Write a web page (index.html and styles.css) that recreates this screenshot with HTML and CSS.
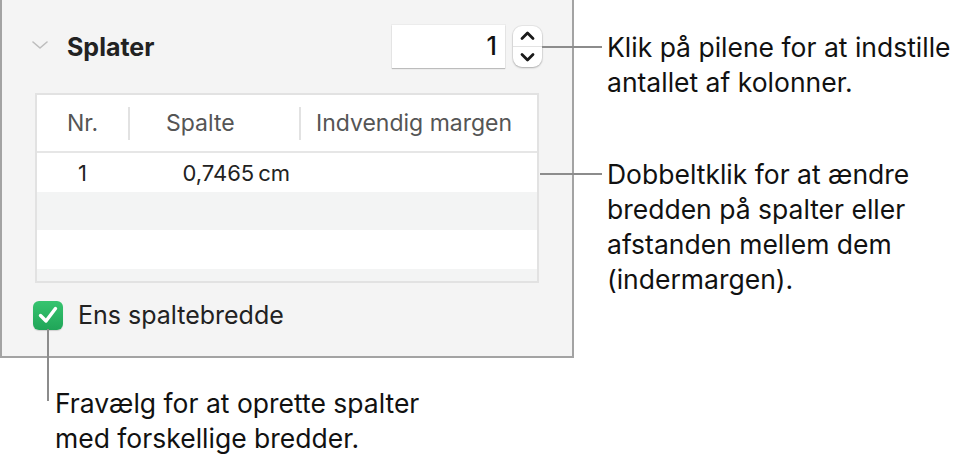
FILE: index.html
```html
<!DOCTYPE html>
<html lang="da">
<head>
    <meta charset="UTF-8">
    <title>Splater</title>
    <link rel="stylesheet" href="styles.css">
</head>
<body>

<div class="page">
    <div class="panel">
        <div class="panel-head">
            <svg class="chevron" width="16" height="8" viewBox="0 0 16 8">
                <path d="M1 1 L8 7 L15 1" fill="none" stroke="#bdbdbd" stroke-width="1.6" stroke-linecap="round" stroke-linejoin="round"/>
            </svg>
            <span class="panel-title">Splater</span>
            <div class="stepper">
                <div class="stepper-field">1</div>
                <div class="stepper-buttons">
                    <svg width="29" height="20" viewBox="0 0 29 20">
                        <path d="M9 12.5 L14.5 7 L20 12.5" fill="none" stroke="#1a1a1a" stroke-width="2.8" stroke-linecap="round" stroke-linejoin="round"/>
                    </svg>
                    <svg width="29" height="20" viewBox="0 0 29 20">
                        <path d="M9 7.5 L14.5 13 L20 7.5" fill="none" stroke="#1a1a1a" stroke-width="2.8" stroke-linecap="round" stroke-linejoin="round"/>
                    </svg>
                </div>
            </div>
        </div>

        <div class="col-table">
            <div class="col-head">
                <div class="cell cell-nr">Nr.</div>
                <div class="cell cell-width sep">Spalte</div>
                <div class="cell cell-gap sep">Indvendig margen</div>
            </div>
            <div class="col-row">
                <div class="cell cell-nr">1</div>
                <div class="cell cell-value">0,7465&#8201;cm</div>
                <div class="cell"></div>
            </div>
            <div class="col-row alt"></div>
            <div class="col-row"></div>
            <div class="col-row alt short"></div>
        </div>

        <label class="check-row">
            <span class="checkbox">
                <svg width="24" height="22" viewBox="0 0 24 22">
                    <path d="M4.5 11.5 L10 17 L19.5 4.5" fill="none" stroke="#fff" stroke-width="3.4" stroke-linecap="round" stroke-linejoin="round"/>
                </svg>
            </span>
            <span>Ens spaltebredde</span>
        </label>
    </div>

    <div class="notes">
        <p class="note note-arrows">Klik på pilene for at indstille<br>antallet af kolonner.</p>
        <p class="note note-table">Dobbeltklik for at ændre<br>bredden på spalter eller<br>afstanden mellem dem<br>(indermargen).</p>
    </div>

    <p class="note note-check">Fravælg for at oprette spalter<br>med forskellige bredder.</p>
</div>

</body>
</html>
```

FILE: styles.css
```css
body {
    margin: 0;
    background-color: white;
    font-family: Inter, "Noto Sans", sans-serif;
    color: #1d1d1d;
}
.page {
    display: grid;
    grid-template-columns: 574px 1fr;
    grid-template-rows: 358px auto;
}
.panel {
    box-sizing: border-box;
    height: 358px;
    background-color: #f4f4f4;
    border: 2px solid #a3a3a3;
    border-top: none;
}
.panel-head {
    display: flex;
    align-items: center;
    height: 43px;
    margin: 25px 30px 0 30px;
}
.chevron {
    margin-top: -4px;
}
.panel-title {
    margin-left: 19px;
    font-size: 25px;
    font-weight: 700;
    color: #222;
}
.stepper {
    display: flex;
    align-items: center;
    gap: 8px;
    margin-left: auto;
}
.stepper-field {
    box-sizing: border-box;
    width: 113px;
    height: 43px;
    padding: 0 8px;
    background-color: white;
    box-shadow: 0 1px 1px rgba(0, 0, 0, 0.2), 0 0 0 1px rgba(0, 0, 0, 0.03);
    text-align: right;
    line-height: 43px;
    font-size: 25px;
    font-weight: 500;
    color: #111;
}
.stepper-buttons {
    display: flex;
    flex-direction: column;
    justify-content: center;
    width: 29px;
    height: 41px;
    background-color: white;
    border-radius: 9px;
    box-shadow: 0 1px 2px rgba(0, 0, 0, 0.25), 0 0 0 1px rgba(0, 0, 0, 0.05);
}
.stepper-buttons svg {
    display: block;
    height: 20px;
}
.stepper-buttons svg + svg {
    border-top: 1px solid #e3e3e3;
}
.col-table {
    width: 504px;
    box-sizing: border-box;
    margin: 25px 0 0 33px;
    background-color: white;
    border: 2px solid #e2e2e2;
}
.col-head, .col-row {
    display: grid;
    grid-template-columns: 91px 171px 1fr;
    align-items: center;
}
.col-head {
    height: 56px;
    border-bottom: 2px solid #e6e6e6;
    font-size: 23px;
    color: #555;
}
.col-head .sep {
    border-left: 2px solid #e2e2e2;
    line-height: 33px;
}
.col-row {
    height: 39px;
    font-size: 22px;
    color: #222;
}
.col-row.alt {
    height: 38px;
    background-color: #f3f4f4;
}
.col-row.short {
    height: 12px;
}
.cell-nr {
    text-align: center;
}
.cell-width {
    padding-left: 36px;
}
.cell-gap {
    padding-left: 15px;
}
.cell-value {
    text-align: right;
    padding-right: 9px;
}
.check-row {
    display: flex;
    align-items: center;
    gap: 15px;
    margin: 17px 0 0 31px;
    font-size: 25px;
    color: #222;
}
.checkbox {
    display: flex;
    align-items: center;
    justify-content: center;
    width: 30px;
    height: 29px;
    border-radius: 6px;
    background: linear-gradient(#36c46f, #20a558);
    box-shadow: 0 1px 1px rgba(0, 0, 0, 0.15);
}
.notes {
    padding-top: 30px;
}
.note {
    position: relative;
    margin: 0;
    font-size: 26.5px;
    line-height: 35px;
    color: #111;
}
.notes .note {
    padding-left: 33px;
}
.note-table {
    margin-top: 57px;
}
.note::before {
    content: "";
    position: absolute;
    background-color: #8c8c8c;
}
.note-arrows::before {
    left: -32px;
    top: 16px;
    width: 60px;
    height: 2px;
}
.note-table::before {
    left: -34px;
    top: 16px;
    width: 62px;
    height: 2px;
}
.note-check {
    margin: 28px 0 0 55px;
}
.note-check::before {
    left: -8px;
    top: -57px;
    width: 2px;
    height: 72px;
}
```
